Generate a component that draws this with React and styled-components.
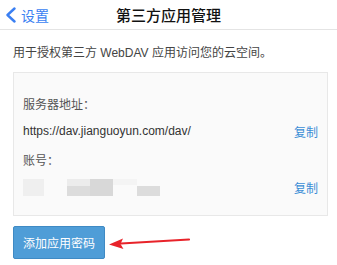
import React from 'react';
import styled, { createGlobalStyle } from 'styled-components';

const GlobalStyle = createGlobalStyle`
  body {
    margin: 0;
    background: #fff;
    font-family: "Liberation Sans", "Noto Sans CJK SC", sans-serif;
  }
`;

const Page = styled.div`
  width: 337px;
  height: 265px;
  overflow: hidden;
  background: #fff;
`;

const NavBar = styled.div`
  height: 29px;
  border-bottom: 1px solid #e4e4e4;
  display: grid;
  grid-template-columns: 1fr auto 1fr;
  align-items: center;
`;

const BackLink = styled.div`
  display: flex;
  align-items: center;
  gap: 4px;
  padding-left: 5px;
  color: #3a7ff2;
  font-size: 14px;
`;

const Title = styled.div`
  font-size: 15px;
  font-weight: 500;
  color: #111;
`;

const Content = styled.div`
  padding: 0 9px 0 13px;
`;

const Intro = styled.p`
  margin: 13px 0 9px;
  font-size: 12px;
  line-height: 20px;
  color: #444;
`;

const Card = styled.div`
  background: #fafafa;
  border: 1px solid #e8e8e8;
  padding: 16px 9px 14px 9px;
`;

const Row = styled.div`
  height: 28px;
  display: flex;
  align-items: center;
  justify-content: space-between;
  font-size: 12px;
  color: ${p => (p.$label ? '#555' : '#333')};
`;

const Copy = styled.span`
  color: #3b8ed6;
  font-size: 12px;
`;

const Actions = styled.div`
  margin-top: 10px;
  display: flex;
  align-items: center;
  gap: 2px;
`;

const Button = styled.button`
  width: 92px;
  height: 33px;
  border: 1px solid #3f8ac4;
  border-radius: 2px;
  background: #4f9dd7;
  color: #fff;
  font-family: inherit;
  font-size: 12px;
  padding: 0;
`;

const Redacted = () => (
  <svg width="140" height="17" viewBox="0 0 140 17">
    <rect x="0" y="0" width="21" height="17" fill="#efefef" />
    <rect x="44" y="0" width="23" height="7" fill="#ececec" />
    <rect x="44" y="7" width="23" height="10" fill="#dcdcdc" />
    <rect x="67" y="0" width="23" height="17" fill="#d8d8d8" />
    <rect x="90" y="0" width="24" height="6" fill="#f4f4f4" />
    <rect x="114" y="7" width="23" height="10" fill="#dcdcdc" />
  </svg>
);

const Arrow = () => (
  <svg width="84" height="14" viewBox="0 0 84 14">
    <path d="M14 7.5 L82 3.5" stroke="#e8232a" strokeWidth="2.2" strokeLinecap="round" />
    <path d="M2 8.5 L16 2.5 L13.5 8 L16.5 13 Z" fill="#e8232a" />
  </svg>
);

export default function App() {
  return (
    <Page>
      <GlobalStyle />
      <NavBar>
        <BackLink>
          <svg width="12" height="16" viewBox="0 0 12 16">
            <path d="M9.5 1.5 L2.5 8 L9.5 14.5" fill="none" stroke="#3a7ff2" strokeWidth="2.4" strokeLinecap="round" strokeLinejoin="round" />
          </svg>
          设置
        </BackLink>
        <Title>第三方应用管理</Title>
        <div />
      </NavBar>
      <Content>
        <Intro>用于授权第三方 WebDAV 应用访问您的云空间。</Intro>
        <Card>
          <Row $label>服务器地址：</Row>
          <Row>
            <span>https://dav.jianguoyun.com/dav/</span>
            <Copy>复制</Copy>
          </Row>
          <Row $label>账号：</Row>
          <Row>
            <Redacted />
            <Copy>复制</Copy>
          </Row>
        </Card>
        <Actions>
          <Button>添加应用密码</Button>
          <Arrow />
        </Actions>
      </Content>
    </Page>
  );
}
